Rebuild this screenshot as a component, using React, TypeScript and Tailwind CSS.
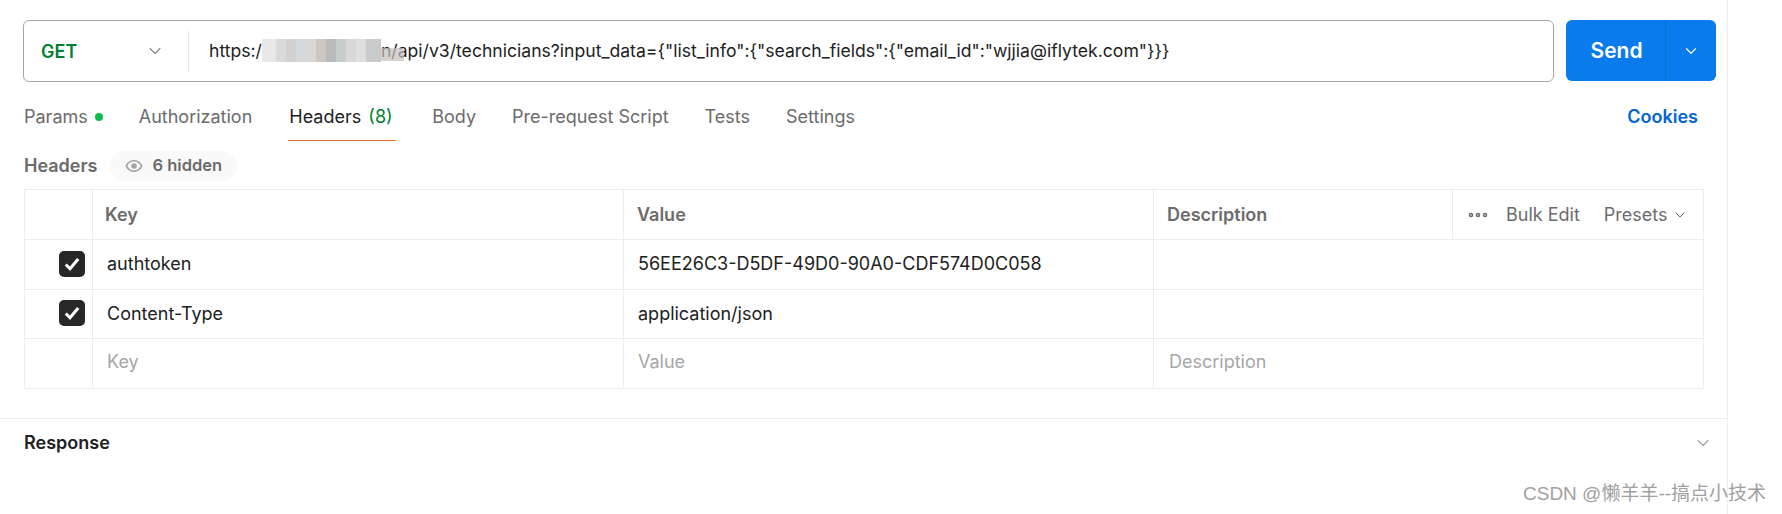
import { ChevronDown } from 'lucide-react'

const blurBlocks = [
  { width: 'w-[14px]', color: 'bg-[#e8e8e8]' },
  { width: 'w-[10px]', color: 'bg-[#dcdad9]' },
  { width: 'w-[10px]', color: 'bg-[#d2d2d3]' },
  { width: 'w-[10px]', color: 'bg-[#d5d8da]' },
  { width: 'w-[10px]', color: 'bg-[#d9d6d4]' },
  { width: 'w-[10px]', color: 'bg-[#ccc5c0]' },
  { width: 'w-[10px]', color: 'bg-[#b9babc]' },
  { width: 'w-[10px]', color: 'bg-[#c6cdcc]' },
  { width: 'w-[10px]', color: 'bg-[#d9d8d6]' },
  { width: 'w-[10px]', color: 'bg-[#e0dfde]' },
  { width: 'w-[15px]', color: 'bg-[#c9cacc]' },
]

const tabs = ['Body', 'Pre-request Script', 'Tests', 'Settings']

function CheckBox() {
  return (
    <div className="flex h-[26px] w-[26px] items-center justify-center rounded-[5px] bg-[#282828]">
      <svg width="20" height="20" viewBox="0 0 20 20" fill="none">
        <path d="M3.8 10.5L8 14.8L16.2 5" stroke="white" strokeWidth="3" />
      </svg>
    </div>
  )
}

function HeaderRow({ name, value, enabled, height }: { name: string; value: string; enabled: boolean; height: string }) {
  const textCell = enabled ? 'pb-[2px]' : 'pb-[4px] text-[#a6a6a6]'
  return (
    <div className={`grid grid-cols-[68px_531px_530px_1fr] border-b border-[#ededed] text-[#212121] last:border-b-0 ${height}`}>
      <div className="flex items-center justify-end border-r border-[#ededed] pb-[2px] pr-[7px]">
        {enabled && <CheckBox />}
      </div>
      <div className={`flex items-center border-r border-[#ededed] pl-[14px] ${textCell}`}>{name}</div>
      <div className={`flex items-center border-r border-[#ededed] pl-[14px] ${textCell}`}>{value}</div>
      <div className={`flex items-center pl-[15px] ${textCell}`}>{enabled ? '' : 'Description'}</div>
    </div>
  )
}

export default function App() {
  return (
    <div className="relative h-[514px] w-[1782px] overflow-hidden bg-white font-['Inter',sans-serif] text-[18px] text-[#6b6b6b]">
      <div className="h-full w-[1728px] border-r border-[#ededed]">
        <div className="flex pl-[23px] pr-[11px] pt-[20px]">
          <div className="flex h-[62px] w-[1531px] items-center rounded-[6px] border border-[#a6a6a6]">
            <div className="flex h-[41px] w-[165px] items-center justify-between border-r border-[#e6e6e6] pl-[17px] pr-[24px]">
              <span className="font-semibold text-[#007f31]">GET</span>
              <ChevronDown size={20} strokeWidth={1.25} className="mr-[-1px] text-[#555]" />
            </div>
            <div className="flex items-center whitespace-nowrap pl-[20px] text-[17.6px] text-[#212121]">
              <span>https:/</span>
              <span className="flex h-[23px] items-stretch">
                {blurBlocks.map((block, i) => (
                  <span key={i} className={`${block.width} ${block.color}`} />
                ))}
              </span>
              <span className="relative">
                {'n/api/v3/technicians?input_data={"list_info":{"search_fields":{"email_id":"wjjia@iflytek.com"}}}'}
                <span className="absolute left-0 top-[10px] h-[13px] w-[23px] bg-[#c4c0bd]/70" />
              </span>
            </div>
          </div>
          <div className="ml-[12px] flex h-[61px] w-[150px] rounded-[6px] bg-[#097bed] text-white">
            <div className="flex w-[100px] items-center justify-center border-r border-[#0a6fd3] pl-[2px] text-[21px] font-semibold">Send</div>
            <div className="flex flex-1 items-center justify-center">
              <ChevronDown size={18} strokeWidth={1.5} />
            </div>
          </div>
        </div>

        <div className="flex h-[60px] items-start justify-between pl-[24px] pr-[29px] pt-[21px]">
          <div className="flex items-start">
            <div className="flex items-start">
              Params
              <span className="ml-[7px] mt-[10px] h-[8px] w-[8px] rounded-full bg-[#0cbb52]" />
            </div>
            <span className="ml-[36px]">Authorization</span>
            <div className="ml-[36px] h-[38px] w-[108px] border-b border-[#f26b3a] pl-[1px] text-[#212121]">
              Headers <span className="ml-[2px] text-[#007f31]">(8)</span>
            </div>
            {tabs.map((tab) => (
              <span key={tab} className="ml-[36px]">{tab}</span>
            ))}
          </div>
          <span className="font-semibold text-[#0265d2]">Cookies</span>
        </div>

        <div className="flex h-[47px] items-center pl-[24px]">
          <span className="font-semibold text-[#6b6b6b]">Headers</span>
          <div className="ml-[12px] flex h-[30px] w-[127px] items-center rounded-full bg-[#f9f9f9] pl-[15px] text-[16.5px] font-semibold">
            <svg width="18" height="12" viewBox="0 0 18 12" className="mr-[10px]">
              <path fillRule="evenodd" fill="#a6a6a6" d="M9 0C5 0 1.8 2.4 0.5 6C1.8 9.6 5 12 9 12C13 12 16.2 9.6 17.5 6C16.2 2.4 13 0 9 0ZM9 1.6C11.9 1.6 14.3 3.3 15.6 6C14.3 8.7 11.9 10.4 9 10.4C6.1 10.4 3.7 8.7 2.4 6C3.7 3.3 6.1 1.6 9 1.6ZM9 3.2A2.8 2.8 0 1 0 9 8.8A2.8 2.8 0 1 0 9 3.2Z" />
            </svg>
            6 hidden
          </div>
        </div>

        <div className="ml-[24px] w-[1680px] border border-[#ededed]">
          <div className="grid h-[50px] grid-cols-[68px_531px_530px_1fr] border-b border-[#ededed] font-semibold">
            <div className="border-r border-[#ededed]" />
            <div className="flex items-center border-r border-[#ededed] pl-[12px]">Key</div>
            <div className="flex items-center border-r border-[#ededed] pl-[13px]">Value</div>
            <div className="flex items-center">
              <div className="flex h-full w-[298px] items-center pl-[13px]">Description</div>
              <div className="flex h-full flex-1 items-center border-l border-[#ededed] pl-[15px] font-normal">
                <svg width="20" height="6" viewBox="0 0 20 6" fill="#b5b5b5" stroke="#6b6b6b" strokeWidth="1.2">
                  <circle cx="3" cy="3" r="1.7" />
                  <circle cx="10" cy="3" r="1.7" />
                  <circle cx="17" cy="3" r="1.7" />
                </svg>
                <span className="ml-[18px]">Bulk Edit</span>
                <span className="ml-[24px] flex items-center">
                  Presets
                  <ChevronDown size={16} strokeWidth={1.5} className="ml-[4px]" />
                </span>
              </div>
            </div>
          </div>
          <HeaderRow name="authtoken" value="56EE26C3-D5DF-49D0-90A0-CDF574D0C058" enabled height="h-[50px]" />
          <HeaderRow name="Content-Type" value="application/json" enabled height="h-[49px]" />
          <HeaderRow name="Key" value="Value" enabled={false} height="h-[49px]" />
        </div>

        <div className="mt-[29px] flex h-[50px] items-center justify-between border-t border-[#ededed] pb-[2px] pl-[24px] pr-[14px]">
          <span className="font-semibold text-[#212121]">Response</span>
          <ChevronDown size={20} strokeWidth={1.25} className="text-[#7a7a7a]" />
        </div>
      </div>

      <span className="absolute left-[1523px] top-[480px] font-['Liberation_Sans','Noto_Sans_CJK_SC',sans-serif] text-[19px] text-[#a0a0a0]">
        CSDN @懒羊羊--搞点小技术
      </span>
    </div>
  )
}
